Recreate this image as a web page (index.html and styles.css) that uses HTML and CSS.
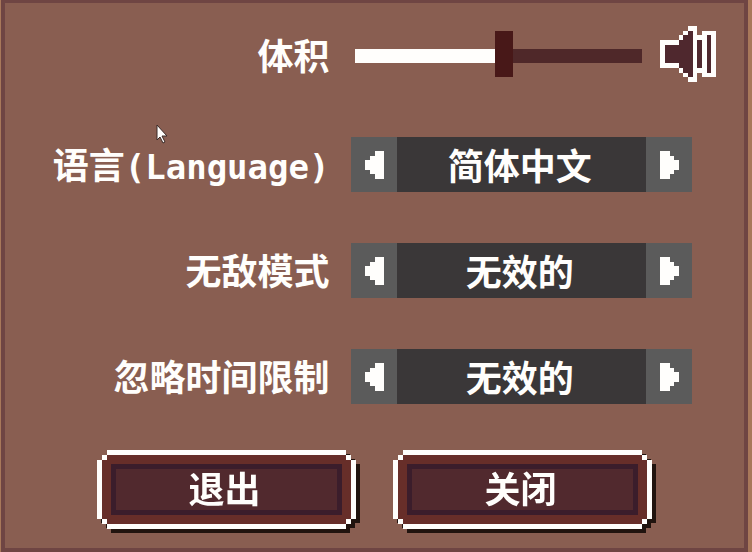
FILE: index.html
```html
<!DOCTYPE html>
<html lang="zh-CN">
<head>
  <meta charset="utf-8">
  <title>设置</title>
  <link rel="stylesheet" href="styles.css">
</head>
<body>
  <main class="panel">
    <div class="settings">
      <label class="label" for="volume">体积</label>
      <div class="volume">
        <input class="slider" id="volume" type="range" min="0" max="100" value="52" style="--level: 52%">
        <svg class="speaker" viewBox="0 0 12 12" aria-hidden="true">
          <path class="speaker-fill" d="M1 4h3V3h1V2h1V1h1v10H6v-1H5V9H4V8H1zM8 3h1v6H8zM10 2h1v8h-1z"/>
          <path d="M0 3h4v1H1v4h3v1H0zM4 2h1v1H4zM5 1h1v1H5zM6 0h2v12H6v-1h1V1H6zM5 10h1v1H5zM4 9h1v1H4zM8 2h1v1H8zM8 9h1v1H8zM9 1h3v10H9zM10 2v8h1V2z" fill-rule="evenodd"/>
        </svg>
      </div>

      <label class="label" for="language">语言<span class="latin">(Language)</span></label>
      <div class="selector">
        <button class="arrow" type="button" aria-label="上一个">
          <svg viewBox="0 0 4 6"><path d="M2 0h2v6H2V5H1V4H0V2h1V1h1z"/></svg>
        </button>
        <output class="value" id="language">简体中文</output>
        <button class="arrow" type="button" aria-label="下一个">
          <svg viewBox="0 0 4 6"><path d="M0 0h2v1h1v1h1v2H3v1H2v1H0z"/></svg>
        </button>
      </div>

      <label class="label" for="invincible">无敌模式</label>
      <div class="selector">
        <button class="arrow" type="button" aria-label="上一个">
          <svg viewBox="0 0 4 6"><path d="M2 0h2v6H2V5H1V4H0V2h1V1h1z"/></svg>
        </button>
        <output class="value" id="invincible">无效的</output>
        <button class="arrow" type="button" aria-label="下一个">
          <svg viewBox="0 0 4 6"><path d="M0 0h2v1h1v1h1v2H3v1H2v1H0z"/></svg>
        </button>
      </div>

      <label class="label" for="no-limit">忽略时间限制</label>
      <div class="selector">
        <button class="arrow" type="button" aria-label="上一个">
          <svg viewBox="0 0 4 6"><path d="M2 0h2v6H2V5H1V4H0V2h1V1h1z"/></svg>
        </button>
        <output class="value" id="no-limit">无效的</output>
        <button class="arrow" type="button" aria-label="下一个">
          <svg viewBox="0 0 4 6"><path d="M0 0h2v1h1v1h1v2H3v1H2v1H0z"/></svg>
        </button>
      </div>
    </div>

    <div class="actions">
      <button class="action" type="button"><span class="action-text">退出</span></button>
      <button class="action" type="button"><span class="action-text">关闭</span></button>
    </div>
  </main>

  <svg class="cursor" viewBox="0 0 12 20" aria-hidden="true">
    <path d="M1 1v15l3-3 3 6 2-1-3-6h5z"/>
  </svg>
</body>
</html>
```

FILE: styles.css
```css
* {
  box-sizing: border-box;
}

body {
  margin: 0;
  background-color: #a8785a;
  color: #fffefc;
  font-family: "Noto Sans CJK SC", sans-serif;
  font-size: 36px;
  font-weight: bold;
  line-height: 50px;
}

svg {
  display: block;
  fill: #fffefc;
  shape-rendering: crispEdges;
}

button {
  padding: 0;
  border: 0;
  color: inherit;
  font: inherit;
}

.panel {
  min-height: 100vh;
  margin: 0 4px 0 1px;
  padding: 23px 0 18px;
  border: 4px solid #6f4543;
  border-top-width: 3px;
  background-color: #895e51;
}

.settings {
  display: grid;
  grid-template-columns: minmax(0, 324fr) minmax(0, 364fr);
  column-gap: 22px;
  row-gap: 51px;
  align-items: center;
  padding-right: 28px;
}

.label {
  padding-bottom: 4px;
  text-align: right;
  white-space: nowrap;
}

.latin {
  font-family: "DejaVu Sans Mono", monospace;
  font-size: 34px;
  line-height: 1;
}

/* volume */
.volume {
  display: flex;
  align-items: center;
  gap: 18px;
  padding: 0 0 4px 4px;
}

.slider {
  -webkit-appearance: none;
  appearance: none;
  flex: 1;
  min-width: 0;
  height: 50px;
  margin: 0;
  padding: 4px 0 0;
  background: none;
}

.slider::-webkit-slider-runnable-track {
  height: 14px;
  background: linear-gradient(to right, #fffefc var(--level), #4f2829 var(--level));
}

.slider::-webkit-slider-thumb {
  -webkit-appearance: none;
  width: 18px;
  height: 46px;
  margin-top: -18px;
  background-color: #481818;
}

.speaker {
  width: 56px;
  height: 56px;
}

.speaker-fill {
  fill: #4f282e;
}

/* selectors */
.selector {
  display: flex;
  height: 55px;
  margin-right: 24px;
  background-color: #3a3738;
}

.arrow {
  display: flex;
  align-items: center;
  justify-content: center;
  width: 46px;
  background-color: #5b5b5b;
}

.arrow svg {
  width: 19px;
  height: 28px;
}

.value {
  flex: 1;
  padding-right: 4px;
  line-height: 54px;
  text-align: center;
}

/* bottom buttons */
.actions {
  display: flex;
  justify-content: center;
  gap: 37px;
  margin-top: 46px;
}

.action {
  position: relative;
  width: 259px;
  padding: 14px;
  background: none;
  filter: drop-shadow(4px 4px 0 #21140f);
}

.action::before,
.action::after {
  content: "";
  position: absolute;
}

.action::before {
  inset: 0;
  background-color: #fffefc;
  clip-path: polygon(
    10px 0, calc(100% - 10px) 0, calc(100% - 10px) 5px, calc(100% - 5px) 5px, calc(100% - 5px) 10px, 100% 10px,
    100% calc(100% - 10px), calc(100% - 5px) calc(100% - 10px), calc(100% - 5px) calc(100% - 5px), calc(100% - 10px) calc(100% - 5px), calc(100% - 10px) 100%,
    10px 100%, 10px calc(100% - 5px), 5px calc(100% - 5px), 5px calc(100% - 10px), 0 calc(100% - 10px),
    0 10px, 5px 10px, 5px 5px, 10px 5px
  );
}

.action::after {
  inset: 5px;
  background-color: #672e29;
  clip-path: polygon(
    5px 0, calc(100% - 5px) 0, calc(100% - 5px) 5px, 100% 5px,
    100% calc(100% - 5px), calc(100% - 5px) calc(100% - 5px), calc(100% - 5px) 100%,
    5px 100%, 5px calc(100% - 5px), 0 calc(100% - 5px),
    0 5px, 5px 5px
  );
}

.action-text {
  position: relative;
  z-index: 1;
  display: block;
  padding: 0 4px 4px 0;
  border: 5px solid #3b1d2b;
  background-color: #51292e;
  line-height: 37px;
}

.cursor {
  position: absolute;
  left: 156px;
  top: 124px;
  width: 12px;
  height: 20px;
  stroke: #3a2a28;
  stroke-width: 1;
  shape-rendering: auto;
}
```
